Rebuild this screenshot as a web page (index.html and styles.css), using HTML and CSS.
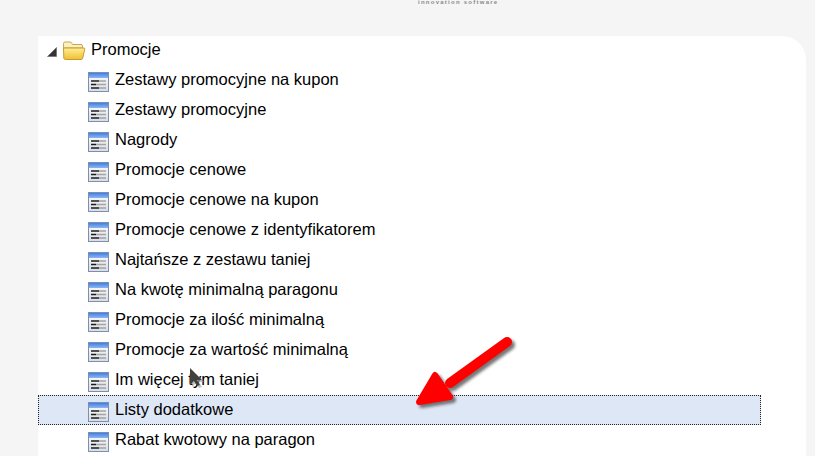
FILE: index.html
```html
<!DOCTYPE html>
<html lang="pl">
<head>
    <meta charset="UTF-8">
    <meta name="viewport" content="width=device-width, initial-scale=1.0">
    <title>Promocje</title>
    <link rel="stylesheet" href="styles.css">
</head>
<body>
    <svg width="0" height="0" class="defs">
        <defs>
            <linearGradient id="bar" x1="0" y1="0" x2="0" y2="1">
                <stop offset="0" stop-color="#3f80e4"/>
                <stop offset="1" stop-color="#8fb6f2"/>
            </linearGradient>
            <linearGradient id="page" x1="0" y1="0" x2="0" y2="1">
                <stop offset="0" stop-color="#ffffff"/>
                <stop offset="1" stop-color="#d8dce4"/>
            </linearGradient>
            <linearGradient id="fold" x1="0" y1="0" x2="0" y2="1">
                <stop offset="0" stop-color="#ffef96"/>
                <stop offset="1" stop-color="#f0bf30"/>
            </linearGradient>
            <symbol id="form" viewBox="0 0 21 20">
                <rect x="0.5" y="0.5" width="20" height="19" fill="url(#page)" stroke="#7c8fb0"/>
                <rect x="1" y="1" width="19" height="5" fill="url(#bar)"/>
                <path d="M3 9h8M3 12.500h5M3 16h8" stroke="#1c1c1c" stroke-width="1.500" fill="none"/>
                <path d="M11 9h7M8 12.500h10M11 16h7" stroke="#a3a3a3" stroke-width="1.500" fill="none"/>
            </symbol>
        </defs>
    </svg>

    <div class="header">
        <span class="tagline">innovation software</span>
    </div>

    <div class="panel">
        <div class="tree-root">
            <svg class="toggle" width="10" height="10" viewBox="0 0 10 10"><path d="M9.500 .5v9H.5z" fill="#333" stroke="#666" stroke-width="0.600"/></svg>
            <svg class="folder" width="24" height="20" viewBox="0 0 24 20">
                <path d="M1.500 6V2.500Q1.500 1 3 1h5q1.500 0 2 1.500l.5 1H19q1.500 0 1.500 1.500v2H1.500z" fill="#fdf0b8" stroke="#c9a55c"/>
                <path d="M1.500 7H22q1 0 .7 1.200l-2 9q-.3 1.300-1.500 1.300H3.500q-1.500 0-1.700-1.500z" fill="url(#fold)" stroke="#c49a38"/>
            </svg>
            <span>Promocje</span>
        </div>
        <ul class="tree">
            <li><svg class="form-icon"><use href="#form"/></svg>Zestawy promocyjne na kupon</li>
            <li><svg class="form-icon"><use href="#form"/></svg>Zestawy promocyjne</li>
            <li><svg class="form-icon"><use href="#form"/></svg>Nagrody</li>
            <li><svg class="form-icon"><use href="#form"/></svg>Promocje cenowe</li>
            <li><svg class="form-icon"><use href="#form"/></svg>Promocje cenowe na kupon</li>
            <li><svg class="form-icon"><use href="#form"/></svg>Promocje cenowe z identyfikatorem</li>
            <li><svg class="form-icon"><use href="#form"/></svg>Najtańsze z zestawu taniej</li>
            <li><svg class="form-icon"><use href="#form"/></svg>Na kwotę minimalną paragonu</li>
            <li><svg class="form-icon"><use href="#form"/></svg>Promocje za ilość minimalną</li>
            <li><svg class="form-icon"><use href="#form"/></svg>Promocje za wartość minimalną</li>
            <li><svg class="form-icon"><use href="#form"/></svg>Im więcej tym taniej</li>
            <li class="selected"><svg class="form-icon"><use href="#form"/></svg>Listy dodatkowe</li>
            <li><svg class="form-icon"><use href="#form"/></svg>Rabat kwotowy na paragon</li>
        </ul>
    </div>

    <!-- annotation on top of the screenshot -->
    <svg class="arrow" width="120" height="90" viewBox="0 0 120 90">
        <filter id="soft" x="-20%" y="-20%" width="150%" height="150%">
            <feGaussianBlur stdDeviation="1.500"/>
        </filter>
        <g transform="translate(3 3)" fill="#555" stroke="#555" filter="url(#soft)" opacity="0.8">
            <path d="M107 7 L50 48" stroke-width="10" stroke-linecap="round"/>
            <path d="M19 67 L35 40 L50 62z" stroke-width="6" stroke-linejoin="round"/>
        </g>
        <path d="M107 7 L50 48" stroke="#ff0000" stroke-width="10" stroke-linecap="round" fill="none"/>
        <path d="M19 67 L35 40 L50 62z" fill="#ff0000" stroke="#ff0000" stroke-width="6" stroke-linejoin="round"/>
    </svg>

    <svg class="cursor" width="16" height="24" viewBox="0 0 16 24">
        <path d="M2 1v17l4-4 3 5 3-1-3-5h5z" fill="#9a9a9a" opacity="0.6" transform="translate(1 1)"/>
        <path d="M1 0v17l4-4 3 5 3-1-3-5h5z" fill="#404040"/>
    </svg>
</body>
</html>
```

FILE: styles.css
```css
html, body { height: 100%; }
body { margin: 0; overflow: hidden; background-color: #f5f5f5; color: #000; font-family: "Liberation Sans", Arial, sans-serif; font-size: 16.5px; }
.defs { position: absolute; }

.header { height: 36px; padding-left: 418px; overflow: hidden; }
.tagline { display: block; font-size: 6px; line-height: 5px; letter-spacing: 1.25px; white-space: nowrap; color: #8a8a8a; font-weight: bold; }

.panel { width: 768px; height: 420px; margin-left: 38px; background-color: #fff; border-top-right-radius: 24px; }

.tree-root { display: flex; align-items: center; height: 26px; padding-left: 9px; margin-bottom: 3px; }
.toggle { margin-right: 5px; margin-top: 5px; }
.folder { margin-right: 5px; margin-top: 3px; }

.tree { list-style: none; margin: 0; padding: 0; }
.tree li { display: flex; align-items: center; box-sizing: border-box; width: 723px; height: 30px; padding: 0 0 2px 49px; border: 1px solid transparent; }
.tree li.selected { background-color: #dde7f6; border: 1px dotted #222; }
.form-icon { width: 21px; height: 20px; margin: 5px 6px 0 0; flex: none; }

.arrow { position: absolute; left: 400px; top: 335px; }
.cursor { position: absolute; left: 189px; top: 368px; }
```
